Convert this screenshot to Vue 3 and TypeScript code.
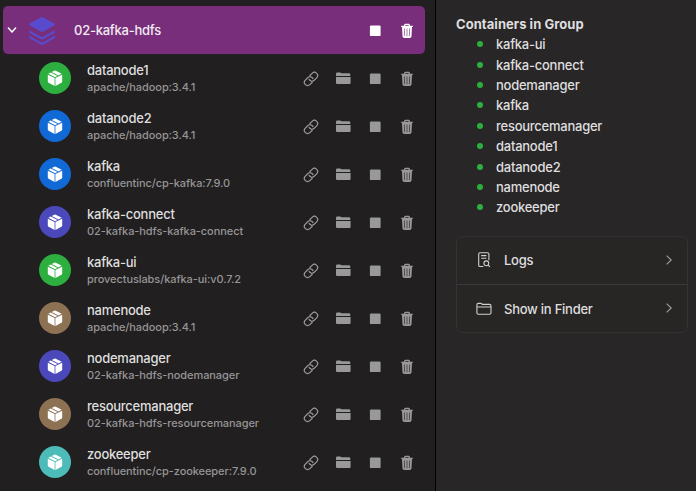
<script setup lang="ts">
interface Container {
  name: string
  image: string
  color: string
}

const group = '02-kafka-hdfs'

const containers: Container[] = [
  { name: 'datanode1', image: 'apache/hadoop:3.4.1', color: 'green' },
  { name: 'datanode2', image: 'apache/hadoop:3.4.1', color: 'blue' },
  { name: 'kafka', image: 'confluentinc/cp-kafka:7.9.0', color: 'blue' },
  { name: 'kafka-connect', image: '02-kafka-hdfs-kafka-connect', color: 'indigo' },
  { name: 'kafka-ui', image: 'provectuslabs/kafka-ui:v0.7.2', color: 'green' },
  { name: 'namenode', image: 'apache/hadoop:3.4.1', color: 'brown' },
  { name: 'nodemanager', image: '02-kafka-hdfs-nodemanager', color: 'indigo' },
  { name: 'resourcemanager', image: '02-kafka-hdfs-resourcemanager', color: 'brown' },
  { name: 'zookeeper', image: 'confluentinc/cp-zookeeper:7.9.0', color: 'teal' },
]

const members: string[] = [
  'kafka-ui', 'kafka-connect', 'nodemanager', 'kafka', 'resourcemanager',
  'datanode1', 'datanode2', 'namenode', 'zookeeper',
]
</script>

<template>
  <div class="window">
    <svg class="symbols" width="0" height="0">
      <symbol id="link" viewBox="0 0 16 16">
        <g fill="none" stroke="currentColor" stroke-width="1.2" transform="rotate(-45 8 8)">
          <path d="M7 11.2H3.2a3.2 3.2 0 0 1 0-6.4h3.4a3.2 3.2 0 0 1 2.9 4.6" />
          <path d="M9 4.8h3.8a3.2 3.2 0 0 1 0 6.4H9.4a3.2 3.2 0 0 1-2.9-4.6" />
        </g>
      </symbol>
      <symbol id="folder" viewBox="0 0 16 16">
        <path fill="currentColor" d="M1 5.1V3c0-1 .5-1.5 1.5-1.5h2.3c.5 0 .8.1 1.1.4l.5.4h7.4c1 0 1.5.5 1.5 1.5v1.3zM1 6h14.6v5.5c0 1-.5 1.5-1.5 1.5H2.5C1.5 13 1 12.5 1 11.5z" />
      </symbol>
      <symbol id="stop" viewBox="0 0 16 16">
        <rect x="2.9" y="2.4" width="10.7" height="10.7" rx="1.2" fill="currentColor" />
      </symbol>
      <symbol id="trash" viewBox="0 0 16 16">
        <path fill="currentColor" d="M5 2.3C5 1.4 5.7.8 6.6.8h2.8c.9 0 1.6.6 1.6 1.5v.5h2.8V4H2.2V2.8H5zM6.2 2.8h3.6v-.4c0-.3-.2-.5-.5-.5H6.7c-.3 0-.5.2-.5.5z" />
        <path fill="currentColor" fill-rule="evenodd" d="M3 4h10l-.5 9.2c-.1 1.1-.8 1.7-1.8 1.7H5.3c-1 0-1.7-.6-1.8-1.7zM5.2 5.4l.3 7.8h.6l-.3-7.8zM7.7 5.4v7.8h.6V5.4zM10.200 5.4l-.3 7.8h.6l.3-7.8z" />
      </symbol>
      <symbol id="box" viewBox="0 0 16 16">
        <g fill="#fff">
          <path d="M.8 4.7 7.6 8v7.9l-6-3.1Q.8 12.4.8 11.5zM15.2 4.7 8.4 8v7.900l6-3.100q.8-.4.8-1.300z" />
          <path d="M1.300 3.8 3.8 2.5l6.7 3.400L8 7.200zM4.800 2 7.200.7q.8-.4 1.600 0l5.900 3.100-3.200 1.600z" />
        </g>
      </symbol>
    </svg>

    <main class="sidebar">
      <header class="group">
        <svg class="caret" viewBox="0 0 10 10"><path d="M1.4 3 5 7l3.6-4" /></svg>
        <svg class="layers" viewBox="0 0 28 30">
          <path d="M12.6 1.5q1.4-.7 2.8 0L26 7.3q1.8 1 0 2.1l-10.500 6.200q-1.500.8-3 0L2 9.400q-1.800-1.100 0-2.100z" />
          <path d="M1 14.200v1.600q0 .7.6 1.100l11 6q1.400.8 2.800 0l11-6q.6-.4.6-1.100v-1.600l-11.600 6.300q-1.400.8-2.800 0z" />
          <path d="M1 19.600v1.600q0 .7.6 1.100l11 6.300q1.400.8 2.800 0l11-6.300q.6-.4.6-1.100v-1.600l-11.600 6.600q-1.400.8-2.800 0z" />
        </svg>
        <span class="group-name">{{ group }}</span>
        <div class="actions">
          <svg><use href="#stop" /></svg>
          <svg><use href="#trash" /></svg>
        </div>
      </header>

      <div v-for="c in containers" :key="c.name" class="row">
        <div class="avatar" :class="c.color"><svg><use href="#box" /></svg></div>
        <div class="label">
          <div class="name">{{ c.name }}</div>
          <div class="image">{{ c.image }}</div>
        </div>
        <div class="actions">
          <svg><use href="#link" /></svg>
          <svg><use href="#folder" /></svg>
          <svg><use href="#stop" /></svg>
          <svg><use href="#trash" /></svg>
        </div>
      </div>
    </main>

    <aside class="detail">
      <h2>Containers in Group</h2>
      <ul>
        <li v-for="m in members" :key="m"><i class="dot"></i><span>{{ m }}</span></li>
      </ul>
      <nav class="card">
        <div class="link">
          <svg class="link-icon" viewBox="0 0 16 16">
            <path d="M7.3 14.5H4c-.8 0-1.3-.5-1.3-1.3V2c0-.8.5-1.3 1.300-1.300h7.600c.8 0 1.300.5 1.300 1.300v6.200M5.200 3.600h5.200M5.200 6.200h5.200" />
            <circle cx="10.3" cy="11.3" r="2.4" />
            <path d="m12.1 13.1 1.8 1.8" />
          </svg>
          <span>Logs</span>
          <svg class="chevron" viewBox="0 0 8 12"><path d="m1.6 1.6 4.6 4.4-4.6 4.4" /></svg>
        </div>
        <div class="link">
          <svg class="link-icon" viewBox="0 0 16 16">
            <path d="M.9 11.800V3.900c0-1 .5-1.500 1.500-1.500h2.200c.5 0 .8.1 1.100.4l.8.6h7c1 0 1.500.5 1.500 1.500v6.900c0 1-.5 1.500-1.500 1.500H2.400c-1 0-1.500-.5-1.500-1.500zM.9 6H15" />
          </svg>
          <span>Show in Finder</span>
          <svg class="chevron" viewBox="0 0 8 12"><path d="m1.6 1.6 4.6 4.4-4.6 4.4" /></svg>
        </div>
      </nav>
    </aside>
  </div>
</template>

<style>
body {
  margin: 0;
  overflow: hidden;
}
</style>

<style scoped>
.window {
  display: flex;
  width: 696px;
  height: 491px;
  overflow: hidden;
  background: #282627;
  color: #dfdedf;
  font: 500 13px/16px Inter, "Liberation Sans", sans-serif;
  letter-spacing: -0.25px;
}
.symbols {
  position: absolute;
}
.sidebar {
  box-sizing: border-box;
  width: 436px;
  padding: 6px 10px 0 3px;
  background: #211f20;
  border-right: 1px solid #000;
}
.group {
  display: flex;
  align-items: center;
  box-sizing: border-box;
  height: 48px;
  padding: 0 10px 0 4px;
  border-radius: 5px;
  background: #782e7a;
  color: #fff;
}
.caret {
  width: 10px;
  height: 10px;
  fill: none;
  stroke: #fff;
  stroke-width: 1.5;
  stroke-linecap: round;
  stroke-linejoin: round;
}
.layers {
  width: 28px;
  height: 30px;
  margin: 2px 0 0 11px;
  fill: #594bce;
}
.group-name {
  margin-left: 18px;
  color: #f2eaf2;
}
.actions {
  display: flex;
  gap: 16px;
  margin-left: auto;
}
.actions svg {
  width: 16px;
  height: 16px;
  margin-top: 2px;
}
.row {
  display: flex;
  align-items: center;
  height: 48px;
  padding: 0 10px 0 36px;
}
.row .actions {
  color: #9a999a;
}
.avatar {
  display: flex;
  align-items: center;
  justify-content: center;
  width: 32px;
  height: 32px;
  border-radius: 50%;
}
.avatar svg {
  width: 16px;
  height: 16px;
}
.green { background: #2caf3e; }
.blue { background: #1169d5; }
.indigo { background: #4b48bc; }
.brown { background: #8c7153; }
.teal { background: #4dbcb8; }
.label {
  margin-left: 16px;
}
.image {
  padding-top: 1px;
  margin-bottom: -1px;
  color: #969596;
  font-size: 11px;
  letter-spacing: -0.08px;
}
.detail {
  flex: 1;
  padding: 15px 8px 0 20px;
}
h2 {
  margin: 0;
  font-size: 13px;
  font-weight: 700;
  line-height: 18px;
  letter-spacing: 0.05px;
}
ul {
  margin: 1px 0 18px;
  padding: 0;
  list-style: none;
}
li {
  display: flex;
  align-items: center;
  height: 20.4px;
  padding-left: 21px;
}
.dot {
  width: 6px;
  height: 6px;
  margin-right: 13px;
  border-radius: 50%;
  background: #2caf3e;
}
.card {
  box-sizing: border-box;
  height: 97px;
  border: 1px solid #343233;
  border-radius: 7px;
  background: #272625;
}
.link {
  display: flex;
  align-items: center;
  box-sizing: border-box;
  height: 47px;
  padding: 0 14px 0 19px;
}
.link + .link {
  height: 49px;
  border-top: 1px solid #3c3a3b;
}
.link-icon {
  width: 16px;
  height: 16px;
  margin-right: 12px;
  fill: none;
  stroke: #d0cfd0;
  stroke-width: 1.1;
}
.chevron {
  width: 8px;
  height: 12px;
  margin: 0 0 1px auto;
  fill: none;
  stroke: #9a999a;
  stroke-width: 1.2;
}
</style>
